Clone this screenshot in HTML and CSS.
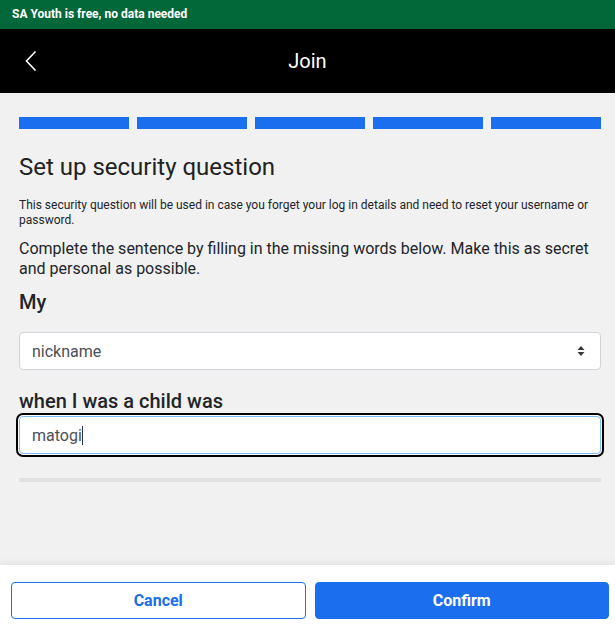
FILE: index.html
```html
<!DOCTYPE html>
<html lang="en">
<head>
<meta charset="utf-8">
<title>Join</title>
<link rel="stylesheet" href="styles.css">
</head>
<body>
<div class="page">
  <div class="promo">SA Youth is free, no data needed</div>
  <header class="topbar">
    <svg class="back" width="12" height="22" viewBox="0 0 12 22"><path d="M10.5 1.5 L1.5 11 L10.5 20.5" fill="none" stroke="#fff" stroke-width="1.6"/></svg>
    <h1 class="topbar-title">Join</h1>
  </header>
  <main class="content">
    <div class="steps">
      <span class="step"></span><span class="step"></span><span class="step"></span><span class="step"></span><span class="step"></span>
    </div>
    <h2 class="title">Set up security question</h2>
    <p class="note">This security question will be used in case you forget your log in details and need to reset your username or password.</p>
    <p class="lead">Complete the sentence by filling in the missing words below. Make this as secret and personal as possible.</p>
    <div class="label label-my">My</div>
    <div class="select">
      <span>nickname</span>
      <svg width="8" height="12" viewBox="0 0 8 12"><path d="M4 1 L7.5 5 H0.5 Z M4 11 L7.5 7 H0.5 Z" fill="#343a40"/></svg>
    </div>
    <div class="label label-child">when I was a child was</div>
    <div class="input"><span>matogi</span><span class="caret"></span></div>
    <div class="divider"></div>
  </main>
  <footer class="actions">
    <button class="btn btn-outline">Cancel</button>
    <button class="btn btn-primary">Confirm</button>
  </footer>
</div>
</body>
</html>
```

FILE: styles.css
```css
* { box-sizing: border-box; }
html, body { margin: 0; padding: 0; }
body {
  font-family: Roboto, "Noto Sans", Arial, sans-serif;
  color: #212529;
  background: #f1f1f1;
}
.page {
  min-height: 100vh;
  display: flex;
  flex-direction: column;
}
.promo {
  height: 29px;
  background: #02683a;
  color: #fff;
  font-weight: 700;
  font-size: 12px;
  line-height: 29px;
  padding-left: 12px;
}
.topbar {
  height: 64px;
  background: #000;
  display: flex;
  align-items: center;
  justify-content: center;
  position: relative;
}
.back {
  position: absolute;
  left: 25px;
  top: 21px;
}
.topbar-title {
  margin: 0;
  color: #fff;
  font-size: 20px;
  font-weight: 400;
}
.content {
  flex: 1;
  padding: 24px 14px 0 19px;
}
.steps {
  display: flex;
  gap: 8px;
}
.step {
  flex: 1;
  height: 12px;
  background: #1b6fee;
}
.title {
  margin: 24px 0 0;
  font-size: 24px;
  font-weight: 400;
  line-height: 29px;
  color: #222;
}
.note {
  margin: 16px 0 0;
  font-size: 12px;
  line-height: 15px;
}
.lead {
  margin: 11px 0 0;
  font-size: 16px;
  line-height: 20px;
}
.label {
  font-size: 20px;
  font-weight: 500;
  line-height: 24px;
}
.label-my { margin-top: 11px; }
.select {
  margin-top: 18px;
  height: 38px;
  background: #fff;
  border: 1px solid #ced4da;
  border-radius: 4px;
  display: flex;
  align-items: center;
  justify-content: space-between;
  padding: 0 15px 0 12px;
  font-size: 16px;
  color: #495057;
}
.label-child { margin-top: 19px; }
.input {
  margin-top: 3px;
  height: 38px;
  background: #fff;
  border: 1px solid #80bdff;
  border-radius: 4px;
  box-shadow: 0 0 0 1px #fff, 0 0 0 3px #000;
  display: flex;
  align-items: center;
  padding: 0 12px;
  font-size: 16px;
  color: #495057;
}
.caret {
  display: inline-block;
  width: 1px;
  height: 19px;
  background: #2b2b4f;
}
.divider {
  margin-top: 24px;
  height: 4px;
  background: #e1e1e1;
}
.actions {
  background: #fff;
  height: 64px;
  display: flex;
  gap: 9px;
  padding: 17px 6px 10px 11px;
  box-shadow: 0 -3px 6px rgba(0,0,0,0.05);
}
.btn {
  flex: 1;
  height: 37px;
  border-radius: 4px;
  font-family: Roboto, "Noto Sans", Arial, sans-serif;
  font-size: 16px;
  font-weight: 700;
  border: 1px solid #1b6fee;
  cursor: pointer;
}
.btn-outline {
  background: #fff;
  color: #1b6fee;
}
.btn-primary {
  background: #1b6fee;
  color: #fff;
}
```
